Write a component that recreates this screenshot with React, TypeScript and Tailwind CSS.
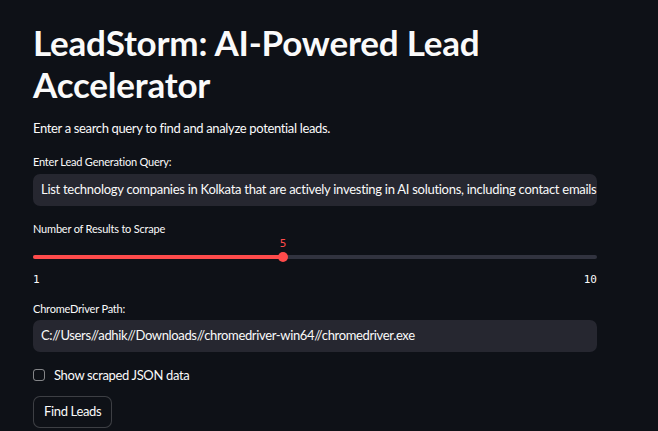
import React from "react";

function Label({ children }: { children: React.ReactNode }) {
  return <p className="text-[11px] leading-[14px] text-[#fafafa] tracking-[-0.2px]">{children}</p>;
}

export default function App() {
  return (
    <div className="min-h-screen w-full bg-[#0e1117] text-[#fafafa] font-['Lato',sans-serif] overflow-hidden">
      <div className="w-[564px] ml-[33px] pt-[21px] flex flex-col">
        <h1 className="text-[35px] leading-[42px] font-bold tracking-[-0.2px]">
          LeadStorm: AI-Powered Lead Accelerator
        </h1>

        <p className="mt-[14px] text-[13px] leading-[18px] tracking-[-0.35px]">
          Enter a search query to find and analyze potential leads.
        </p>

        {/* query input */}
        <div className="mt-[18px]">
          <Label>Enter Lead Generation Query:</Label>
          <div className="mt-[5px] h-[32px] rounded-[7px] bg-[#262730] flex items-center px-[8px] overflow-hidden">
            <span className="text-[13px] whitespace-nowrap tracking-[-0.28px]">
              List technology companies in Kolkata that are actively investing in AI solutions, including contact emails
            </span>
          </div>
        </div>

        {/* slider */}
        <div className="mt-[16px]">
          <Label>Number of Results to Scrape</Label>
          <div className="relative h-[26px] mt-[2px]">
            <span className="absolute left-[250px] -translate-x-1/2 top-[-2px] text-[11px] font-['DejaVu_Sans_Mono',monospace] text-[#ff4b4b]">
              5
            </span>
            <div className="absolute left-0 right-0 top-[17px] h-[4px] rounded-full bg-[#31333f]" />
            <div className="absolute left-0 w-[250px] top-[17px] h-[4px] rounded-full bg-[#ff4b4b]" />
            <div className="absolute left-[245px] top-[14px] w-[10px] h-[10px] rounded-full bg-[#ff4b4b]" />
          </div>
          <div className="flex justify-between mt-[9px] text-[11px] leading-[14px] font-['DejaVu_Sans_Mono',monospace]">
            <span>1</span>
            <span>10</span>
          </div>
        </div>

        {/* path input */}
        <div className="mt-[15px]">
          <Label>ChromeDriver Path:</Label>
          <div className="mt-[4px] h-[32px] rounded-[7px] bg-[#262730] flex items-center px-[8px] overflow-hidden">
            <span className="text-[13px] whitespace-nowrap tracking-[-0.35px]">
              C://Users//adhik//Downloads//chromedriver-win64//chromedriver.exe
            </span>
          </div>
        </div>

        {/* checkbox */}
        <label className="mt-[14px] flex items-center gap-[9px]">
          <span className="w-[12px] h-[12px] rounded-[3px] border border-[#fafafa]/50" />
          <span className="text-[13px] leading-[18px] tracking-[-0.35px]">Show scraped JSON data</span>
        </label>

        {/* button */}
        <div className="mt-[12px]">
          <button className="h-[32px] px-[10px] rounded-[7px] border border-[#fafafa]/20 bg-[#0e1117] text-[13px] tracking-[-0.35px]">
            Find Leads
          </button>
        </div>
      </div>
    </div>
  );
}
